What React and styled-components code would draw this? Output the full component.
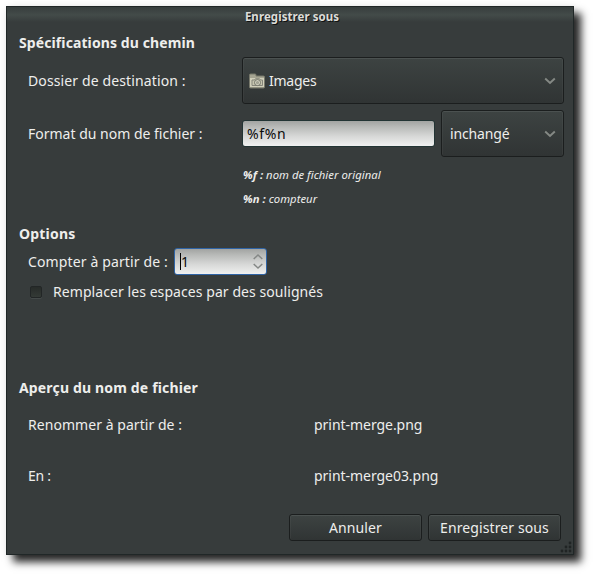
import React from 'react';
import styled, { createGlobalStyle, css } from 'styled-components';

const GlobalStyle = createGlobalStyle`
  *, *::before, *::after { box-sizing: border-box; }
  body {
    margin: 0;
    background: #fff;
    overflow: hidden;
    font-family: "Noto Sans", "Open Sans", sans-serif;
    font-size: 14px;
    color: #eeeeec;
  }
`;

const Desktop = styled.div`
  width: 594px;
  height: 575px;
  padding: 6px 0 0 6px;
`;

const Dialog = styled.div`
  position: relative;
  display: flex;
  flex-direction: column;
  width: 568px;
  height: 549px;
  border: 1px solid #202727;
  background: linear-gradient(#373e3d 0, #434b49 8px, #373c3c 15px);
  box-shadow: 7px 7px 8px rgba(0, 0, 0, 0.85), 0 0 8px rgba(0, 0, 0, 0.06);
`;

const TitleBar = styled.header`
  display: flex;
  justify-content: center;
  height: 21px;
  padding-left: 4px;
  line-height: 19px;
  font-size: 11.5px;
  font-weight: 700;
  letter-spacing: 0.06px;
  color: #dcdcd8;
  text-shadow: 1px 1px 0 #101212;
`;

const Text = styled.span`
  white-space: pre;
  line-height: 20px;
  letter-spacing: ${(p) => p.$track || 0}px;
`;

const Heading = styled.h2`
  margin: 0 0 0 12px;
  height: 22px;
  line-height: 22px;
  font-size: 14px;
  font-weight: 700;
  white-space: pre;
  letter-spacing: ${(p) => p.$track || 0}px;
`;

const PathSection = styled.section`
  padding-top: 4px;
  height: 195px;
`;

const OptionsSection = styled.section`
  height: 154px;
`;

const PreviewSection = styled.section`
  height: 130px;
`;

const FieldGrid = styled.div`
  display: grid;
  grid-template-columns: 214px 322px;
  row-gap: 6px;
  margin: 3px 0 0 21px;
  align-items: center;
`;

const FieldPair = styled.div`
  display: flex;
  align-items: center;
  justify-content: space-between;
`;

const raised = css`
  border: 1px solid #1b1e1e;
  border-radius: 3px;
  background: linear-gradient(#3d4342, #303434);
  box-shadow: inset 0 1px 0 #4b5150, inset 1px 0 0 rgba(255, 255, 255, 0.04),
    inset -1px 0 0 rgba(255, 255, 255, 0.04);
  color: #eeeeec;
  font: inherit;
`;

const ComboBox = styled.button`
  ${raised}
  display: flex;
  align-items: center;
  width: ${(p) => p.$width}px;
  height: 47px;
  padding: 0 7px 0 ${(p) => p.$inset}px;
  gap: 4px;

  & > svg:last-child {
    margin-left: auto;
  }
`;

const fieldFill = css`
  background: linear-gradient(#a2a4a2 0, #b9bbb9 25%, #d6d7d6 60%, #f0f0f0 100%);
  border-radius: 3px;
  color: #0a0a0a;
`;

const TextField = styled.div`
  ${fieldFill}
  display: flex;
  align-items: center;
  width: 193px;
  height: 27px;
  padding-left: 4px;
  border: 1px solid #223434;
  letter-spacing: 0.6px;
`;

const Notes = styled.div`
  display: flex;
  flex-direction: column;
  margin: 6px 0 0 236px;
`;

const Note = styled.p`
  margin: 0;
  height: 24px;
  line-height: 24px;
  font-size: 11.25px;
  font-style: italic;
  white-space: pre;
  letter-spacing: 0.04px;
`;

const CountRow = styled.div`
  display: flex;
  align-items: center;
  height: 27px;
  margin: 3px 0 0 21px;
`;

const SpinField = styled.div`
  ${fieldFill}
  display: flex;
  align-items: center;
  width: 93px;
  height: 27px;
  margin-left: auto;
  padding: 0 2px 0 5px;
  border: 1px solid #2f64a6;
`;

const CountPair = styled.div`
  display: flex;
  align-items: center;
  width: 239px;
`;

const Caret = styled.span`
  width: 1px;
  height: 17px;
  background: #000;
`;

const SpinArrows = styled.svg`
  margin-left: auto;
`;

const CheckRow = styled.label`
  display: flex;
  align-items: center;
  height: 20px;
  margin: 7px 0 0 23px;
  gap: 11px;
`;

const CheckBox = styled.span`
  width: 12px;
  height: 12px;
  border: 1px solid #222626;
  border-radius: 2px;
  background: linear-gradient(#272b29, #343a36);
  box-shadow: 0 1px 0 #454b4a;
`;

const PreviewRow = styled.div`
  display: grid;
  grid-template-columns: 286px 1fr;
  align-items: center;
  height: 51px;
  margin-left: 21px;
`;

const Actions = styled.footer`
  display: flex;
  justify-content: flex-end;
  gap: 6px;
  padding-right: 12px;
  margin-top: 7px;
`;

const ActionButton = styled.button`
  ${raised}
  display: flex;
  align-items: center;
  justify-content: center;
  width: 133px;
  height: 27px;
  padding: 0;
`;

const Grip = styled.svg`
  position: absolute;
  right: 1px;
  bottom: 1px;
`;

const Chevron = () => (
  <svg width="12" height="8" viewBox="0 0 12 8" fill="none">
    <path d="M1.2 1.5 L6 6 L10.8 1.5" stroke="#858985" strokeWidth="1.9" />
  </svg>
);

const PicturesFolder = () => (
  <svg width="16" height="16" viewBox="0 0 16 16">
    <path d="M.5 14V2Q.5 1 1.5 1H6Q7 1 7 2V3H14.5Q15.5 3 15.5 4V14Q15.5 15 14.5 15H1.5Q.5 15 .5 14Z" fill="#a5a492" stroke="#77786b" />
    <path d="M1 5H15V14H1Z" fill="#d0cfba" />
    <path d="M3 12.5V7H5.5L6.5 5.7H10.5L11.5 7H13.5V12.5Z" fill="#c5c4ae" stroke="#85857a" strokeWidth="1" />
    <circle cx="8.5" cy="9.6" r="3" fill="#d8d7c5" stroke="#727468" />
    <circle cx="8.5" cy="9.6" r="1.2" fill="#a6a696" stroke="#88897c" strokeWidth=".6" />
  </svg>
);

const gripDots = [[10, 2], [6, 6], [10, 6], [2, 10], [6, 10], [10, 10]];

export default function App() {
  return (
    <>
      <GlobalStyle />
      <Desktop>
        <Dialog role="dialog">
          <TitleBar>Enregistrer sous</TitleBar>

          <PathSection>
            <Heading $track={0.1}>Spécifications du chemin</Heading>
            <FieldGrid>
              <Text $track={0.12}>Dossier de destination :</Text>
              <ComboBox $width={322} $inset={6}>
                <PicturesFolder />
                <Text $track={-0.25}>Images</Text>
                <Chevron />
              </ComboBox>
              <Text>Format du nom de fichier :</Text>
              <FieldPair>
                <TextField>%f%n</TextField>
                <ComboBox $width={123} $inset={8}>
                  <Text $track={-0.15}>inchangé</Text>
                  <Chevron />
                </ComboBox>
              </FieldPair>
            </FieldGrid>
            <Notes>
              <Note><b>%f :</b> nom de fichier original</Note>
              <Note><b>%n :</b> compteur</Note>
            </Notes>
          </PathSection>

          <OptionsSection>
            <Heading $track={0.2}>Options</Heading>
            <CountRow>
              <CountPair>
                <Text $track={0.13}>Compter à partir de :</Text>
                <SpinField>
                  <Caret />
                  <Text>1</Text>
                  <SpinArrows width="12" height="19" viewBox="0 0 12 19" fill="none">
                    <path d="M1.7 7 L6 3 L10.3 7 M1.7 12 L6 16 L10.3 12" stroke="#858886" strokeWidth="1.5" />
                  </SpinArrows>
                </SpinField>
              </CountPair>
            </CountRow>
            <CheckRow>
              <CheckBox />
              <Text $track={0.07}>Remplacer les espaces par des soulignés</Text>
            </CheckRow>
          </OptionsSection>

          <PreviewSection>
            <Heading $track={0.16}>Aperçu du nom de fichier</Heading>
            <PreviewRow>
              <Text $track={0.05}>Renommer à partir de :</Text>
              <Text $track={-0.04}>print-merge.png</Text>
            </PreviewRow>
            <PreviewRow>
              <Text $track={-0.3}>En :</Text>
              <Text $track={-0.04}>print-merge03.png</Text>
            </PreviewRow>
          </PreviewSection>

          <Actions>
            <ActionButton><Text $track={0.1}>Annuler</Text></ActionButton>
            <ActionButton><Text $track={0.1}>Enregistrer sous</Text></ActionButton>
          </Actions>

          <Grip width="12" height="12" viewBox="0 0 12 12">
            {gripDots.map(([x, y]) => (
              <circle key={`${x}-${y}`} cx={x} cy={y} r="1.4" fill="#202424" />
            ))}
          </Grip>
        </Dialog>
      </Desktop>
    </>
  );
}
